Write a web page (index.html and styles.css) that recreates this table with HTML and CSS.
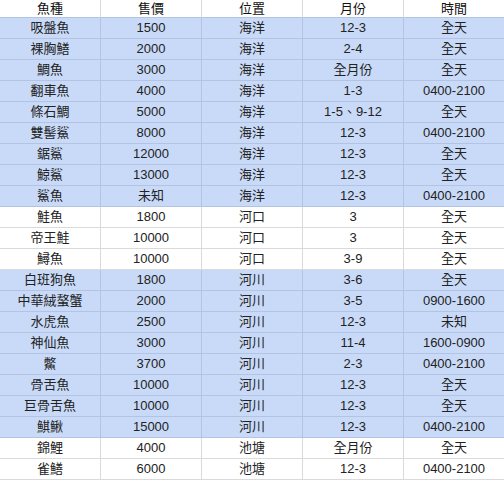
FILE: index.html
```html
<!DOCTYPE html>
<html lang="zh-Hant">
<head>
<meta charset="utf-8">
<link rel="stylesheet" href="styles.css">
</head>
<body>
<table class="sheet">
  <colgroup><col class="c1"><col class="c2"><col class="c3"><col class="c4"><col class="c5"></colgroup>
  <tr class="head"><td>魚種</td><td>售價</td><td>位置</td><td>月份</td><td>時間</td></tr>
  <tr class="blue"><td>吸盤魚</td><td>1500</td><td>海洋</td><td>12-3</td><td>全天</td></tr>
  <tr class="blue"><td>裸胸鱔</td><td>2000</td><td>海洋</td><td>2-4</td><td>全天</td></tr>
  <tr class="blue"><td>鯛魚</td><td>3000</td><td>海洋</td><td>全月份</td><td>全天</td></tr>
  <tr class="blue"><td>翻車魚</td><td>4000</td><td>海洋</td><td>1-3</td><td>0400-2100</td></tr>
  <tr class="blue"><td>條石鯛</td><td>5000</td><td>海洋</td><td>1-5、9-12</td><td>全天</td></tr>
  <tr class="blue"><td>雙髻鯊</td><td>8000</td><td>海洋</td><td>12-3</td><td>0400-2100</td></tr>
  <tr class="blue"><td>鋸鯊</td><td>12000</td><td>海洋</td><td>12-3</td><td>全天</td></tr>
  <tr class="blue"><td>鯨鯊</td><td>13000</td><td>海洋</td><td>12-3</td><td>全天</td></tr>
  <tr class="blue"><td>鯊魚</td><td>未知</td><td>海洋</td><td>12-3</td><td>0400-2100</td></tr>
  <tr class="white"><td>鮭魚</td><td>1800</td><td>河口</td><td>3</td><td>全天</td></tr>
  <tr class="white"><td>帝王鮭</td><td>10000</td><td>河口</td><td>3</td><td>全天</td></tr>
  <tr class="white"><td>鱘魚</td><td>10000</td><td>河口</td><td>3-9</td><td>全天</td></tr>
  <tr class="blue"><td>白班狗魚</td><td>1800</td><td>河川</td><td>3-6</td><td>全天</td></tr>
  <tr class="blue"><td>中華絨螯蟹</td><td>2000</td><td>河川</td><td>3-5</td><td>0900-1600</td></tr>
  <tr class="blue"><td>水虎魚</td><td>2500</td><td>河川</td><td>12-3</td><td>未知</td></tr>
  <tr class="blue"><td>神仙魚</td><td>3000</td><td>河川</td><td>11-4</td><td>1600-0900</td></tr>
  <tr class="blue"><td>鱉</td><td>3700</td><td>河川</td><td>2-3</td><td>0400-2100</td></tr>
  <tr class="blue"><td>骨舌魚</td><td>10000</td><td>河川</td><td>12-3</td><td>全天</td></tr>
  <tr class="blue"><td>巨骨舌魚</td><td>10000</td><td>河川</td><td>12-3</td><td>全天</td></tr>
  <tr class="blue"><td>鯕鰍</td><td>15000</td><td>河川</td><td>12-3</td><td>0400-2100</td></tr>
  <tr class="white"><td>錦鯉</td><td>4000</td><td>池塘</td><td>全月份</td><td>全天</td></tr>
  <tr class="white"><td>雀鱔</td><td>6000</td><td>池塘</td><td>12-3</td><td>0400-2100</td></tr>
</table>
</body>
</html>
```
FILE: styles.css
```css
html, body {
  margin: 0;
  padding: 0;
  background: #ffffff;
}
.sheet {
  border-collapse: separate;
  border-spacing: 0;
  table-layout: fixed;
  width: 504px;
  font-family: "Liberation Sans", Arial, "Noto Sans CJK TC", sans-serif;
  font-size: 13px;
  color: #222222;
}
.c1, .c2, .c3, .c4 { width: 101px; }
.c5 { width: 100px; }
.sheet td {
  padding: 0;
  text-align: center;
  white-space: nowrap;
  overflow: hidden;
  box-sizing: border-box;
  border-right: 1px solid #dadada;
  border-bottom: 1px solid #dadada;
  height: 21px;
  line-height: 20px;
}
.sheet td:last-child { border-right: none; }
.head td {
  height: 18px;
  line-height: 17px;
  color: #111111;
  border-bottom-color: #b3c3e2;
}
.blue td {
  background: #c9daf8;
  border-right-color: #b3c3e2;
  border-bottom-color: #b3c3e2;
}
.white td {
  background: #ffffff;
}
```
